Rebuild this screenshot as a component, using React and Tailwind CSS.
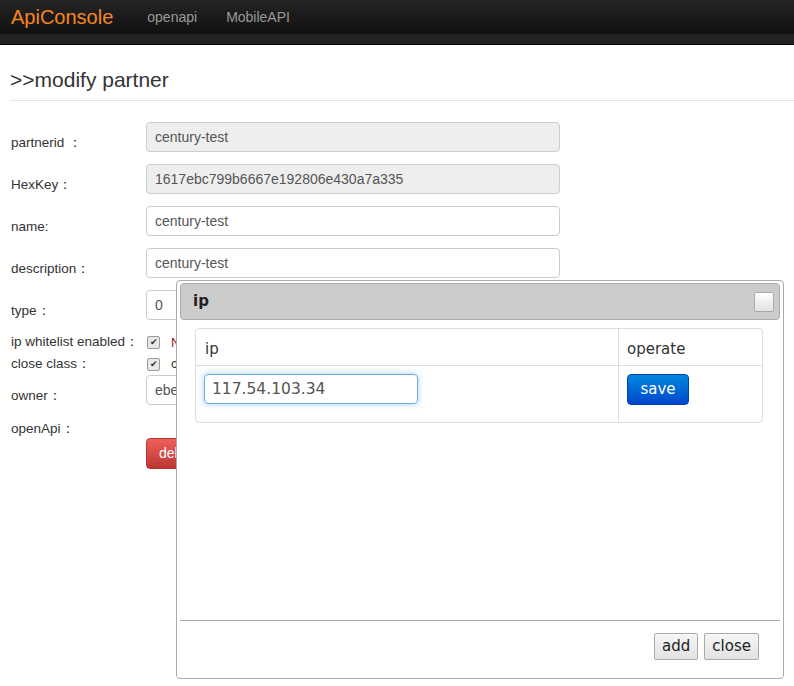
import React from "react";

const rows = [
  { label: "partnerid ：", value: "century-test", disabled: true },
  { label: "HexKey：", value: "1617ebc799b6667e192806e430a7a335", disabled: true },
  { label: "name:", value: "century-test" },
  { label: "description：", value: "century-test" },
  { label: "type：", value: "0" },
];

function Field({ label, value, disabled }) {
  return (
    <div className="flex h-[42px]">
      <div className="w-[135px] pt-[11px] text-[13.5px] text-[#333]">{label}</div>
      <div
        className={`w-[414px] h-[30px] border border-[#ccc] rounded-[4px] px-[8px] leading-[28px] text-[14px] text-[#555] ${
          disabled ? "bg-[#eee]" : "bg-white"
        }`}
      >
        {value}
      </div>
    </div>
  );
}

function CheckBox() {
  return (
    <span className="inline-flex items-center justify-center w-[13px] h-[13px] border border-[#999] rounded-[2px] bg-[#e8e8e8] text-[#333] text-[9px] leading-none">
      ✔
    </span>
  );
}

export default function App() {
  return (
    <div className="relative w-[794px] h-[686px] overflow-hidden bg-white font-['Liberation_Sans',Arial,sans-serif]">
      {/* navbar */}
      <div className="h-[45px] border-b border-black bg-[#222]">
        <div className="h-[34px] bg-gradient-to-b from-[#242424] to-[#111] flex items-center">
          <span className="ml-[11px] text-[20px] text-[#f8861e]">ApiConsole</span>
          <span className="ml-[34px] text-[14px] text-[#999]">openapi</span>
          <span className="ml-[29px] text-[14px] text-[#999]">MobileAPI</span>
        </div>
      </div>

      {/* page */}
      <div className="pl-[10px]">
        <h1 className="pt-[19px] pb-[4px] text-[21px] text-[#333] border-b border-[#e5e5e5]">
          &gt;&gt;modify partner
        </h1>

        <div className="pl-[1px] pt-[21px]">
          {rows.map((r) => (
            <Field key={r.label} {...r} />
          ))}

          <div className="flex h-[22px] items-center">
            <div className="w-[136px] text-[13.5px] text-[#333]">ip whitelist enabled：</div>
            <CheckBox />
            <span className="ml-[11px] text-[13px] text-[#8b1a1a]">N</span>
          </div>
          <div className="flex h-[21px] items-center">
            <div className="w-[136px] text-[13.5px] text-[#333]">close class：</div>
            <CheckBox />
            <span className="ml-[11px] text-[13px] text-[#333]">c</span>
          </div>
          <div className="flex h-[32px]">
            <div className="w-[135px] pt-[11px] text-[13.5px] text-[#333]">owner：</div>
            <div className="w-[414px] h-[30px] border border-[#ccc] rounded-[4px] px-[8px] leading-[28px] text-[14px] text-[#555]">
              ebe
            </div>
          </div>
          <div className="h-[31px] pt-[12px] text-[13.5px] text-[#333]">openApi：</div>
          <div className="pl-[135px]">
            <div className="w-[70px] h-[31px] rounded-[4px] border border-[#b33] bg-gradient-to-b from-[#ee5f5b] to-[#bd362f] text-white text-[14px] leading-[29px] pl-[12px]">
              delete
            </div>
          </div>
        </div>
      </div>

      {/* ip dialog */}
      <div className="absolute left-[176px] top-[280px] w-[608px] h-[399px] bg-white border border-[#aaa] rounded-[4px] px-[3px] pt-[2px] pb-[3px] flex flex-col font-['DejaVu_Sans',Verdana,sans-serif]">
        <div className="h-[37px] bg-[#ccc] border border-[#aaa] rounded-[4px] flex items-center justify-between pl-[12px] pr-[5px]">
          <span className="font-bold text-[15px] text-[#222]">ip</span>
          <span className="w-[20px] h-[20px] border border-[#aaa] rounded-[2px] bg-gradient-to-b from-white to-[#e2e2e2]" />
        </div>

        <div className="flex-1 pt-[8px] pl-[15px] pr-[17px]">
          <div className="border border-[#ddd] rounded-[4px] text-[15px] text-[#333]">
            <div className="flex h-[37px] border-b border-[#ddd]">
              <div className="w-[423px] border-r border-[#ddd] pl-[9px] pt-[9px]">ip</div>
              <div className="flex-1 pl-[8px] pt-[9px]">operate</div>
            </div>
            <div className="flex h-[56px]">
              <div className="w-[423px] border-r border-[#ddd] pl-[8px] pt-[8px]">
                <div className="w-[214px] h-[30px] border border-[#66afe9] rounded-[4px] shadow-[0_0_6px_rgba(102,175,233,0.6)] pl-[7px] leading-[28px] text-[15.5px] text-[#555]">
                  117.54.103.34
                </div>
              </div>
              <div className="flex-1 pl-[8px] pt-[8px]">
                <div className="w-[62px] h-[31px] rounded-[4px] border border-[#0044aa] bg-gradient-to-b from-[#0088dd] to-[#0044cc] text-white text-[15px] leading-[29px] text-center">
                  save
                </div>
              </div>
            </div>
          </div>
        </div>

        <div className="h-[55px] border-t border-[#aaa] flex justify-end items-start pt-[12px] pr-[21px] gap-[6px]">
          <span className="h-[27px] px-[7px] border border-[#aaa] rounded-[2px] bg-gradient-to-b from-[#f6f6f6] to-[#e2e2e2] text-[15px] leading-[25px] text-[#222]">
            add
          </span>
          <span className="h-[27px] px-[7px] border border-[#aaa] rounded-[2px] bg-gradient-to-b from-[#f6f6f6] to-[#e2e2e2] text-[15px] leading-[25px] text-[#222]">
            close
          </span>
        </div>
      </div>
    </div>
  );
}
